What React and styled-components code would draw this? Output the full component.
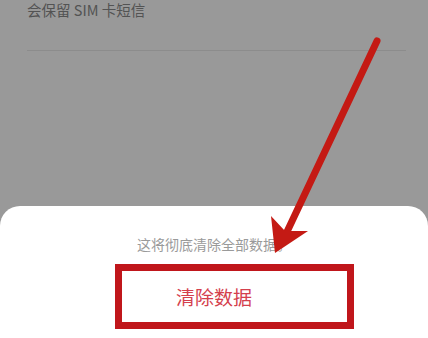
import React from "react";
import styled, { createGlobalStyle } from "styled-components";

const GlobalStyle = createGlobalStyle`
    html, body {
        margin: 0;
        padding: 0;
        background: #999999;
    }
    * {
        box-sizing: border-box;
    }
`;

const Screen = styled.div`
    position: relative;
    width: 428px;
    height: 338px;
    display: flex;
    flex-direction: column;
    background-color: #999999;
    overflow: hidden;
    font-family: "Noto Sans CJK SC", "Noto Sans", sans-serif;
`;

const Setting = styled.div`
    padding: 0 22px 0 27px;
`;

const Hint = styled.div`
    height: 51px;
    font-size: 14.5px;
    line-height: 20px;
    color: #535353;
    border-bottom: 1px solid #8c8c8c;
`;

const Spacer = styled.div`
    flex: 1;
`;

const Sheet = styled.div`
    height: 132px;
    background-color: #ffffff;
    border-radius: 20px 20px 0 0;
    display: flex;
    flex-direction: column;
    align-items: center;
    padding-top: 28px;
`;

const Warning = styled.div`
    font-size: 14px;
    line-height: 20px;
    color: #9a9a9a;
`;

const ClearButton = styled.button`
    margin-top: 10px;
    margin-left: 40px;
    width: 239px;
    height: 65px;
    border: 7px solid #c0161b;
    background: transparent;
    font-family: inherit;
    font-size: 19px;
    color: #d4404d;
    padding: 0 40px 0 0;
    cursor: pointer;
`;

const Arrow = styled.svg`
    position: absolute;
    left: 0;
    top: 0;
    pointer-events: none;
`;

function App() {
    return (
        <Screen>
            <GlobalStyle />
            <Setting>
                <Hint>会保留 SIM 卡短信</Hint>
            </Setting>
            <Spacer />
            <Sheet>
                <Warning>这将彻底清除全部数据。</Warning>
                <ClearButton>清除数据</ClearButton>
            </Sheet>
            <Arrow width="428" height="338" viewBox="0 0 428 338">
                <line x1="377" y1="41" x2="285" y2="236" stroke="#c41a14" strokeWidth="7" strokeLinecap="round" />
                <path d="M275 253 L271 216 L285 231 L308 231 Z" fill="#c41a14" />
            </Arrow>
        </Screen>
    );
}

export default App;
